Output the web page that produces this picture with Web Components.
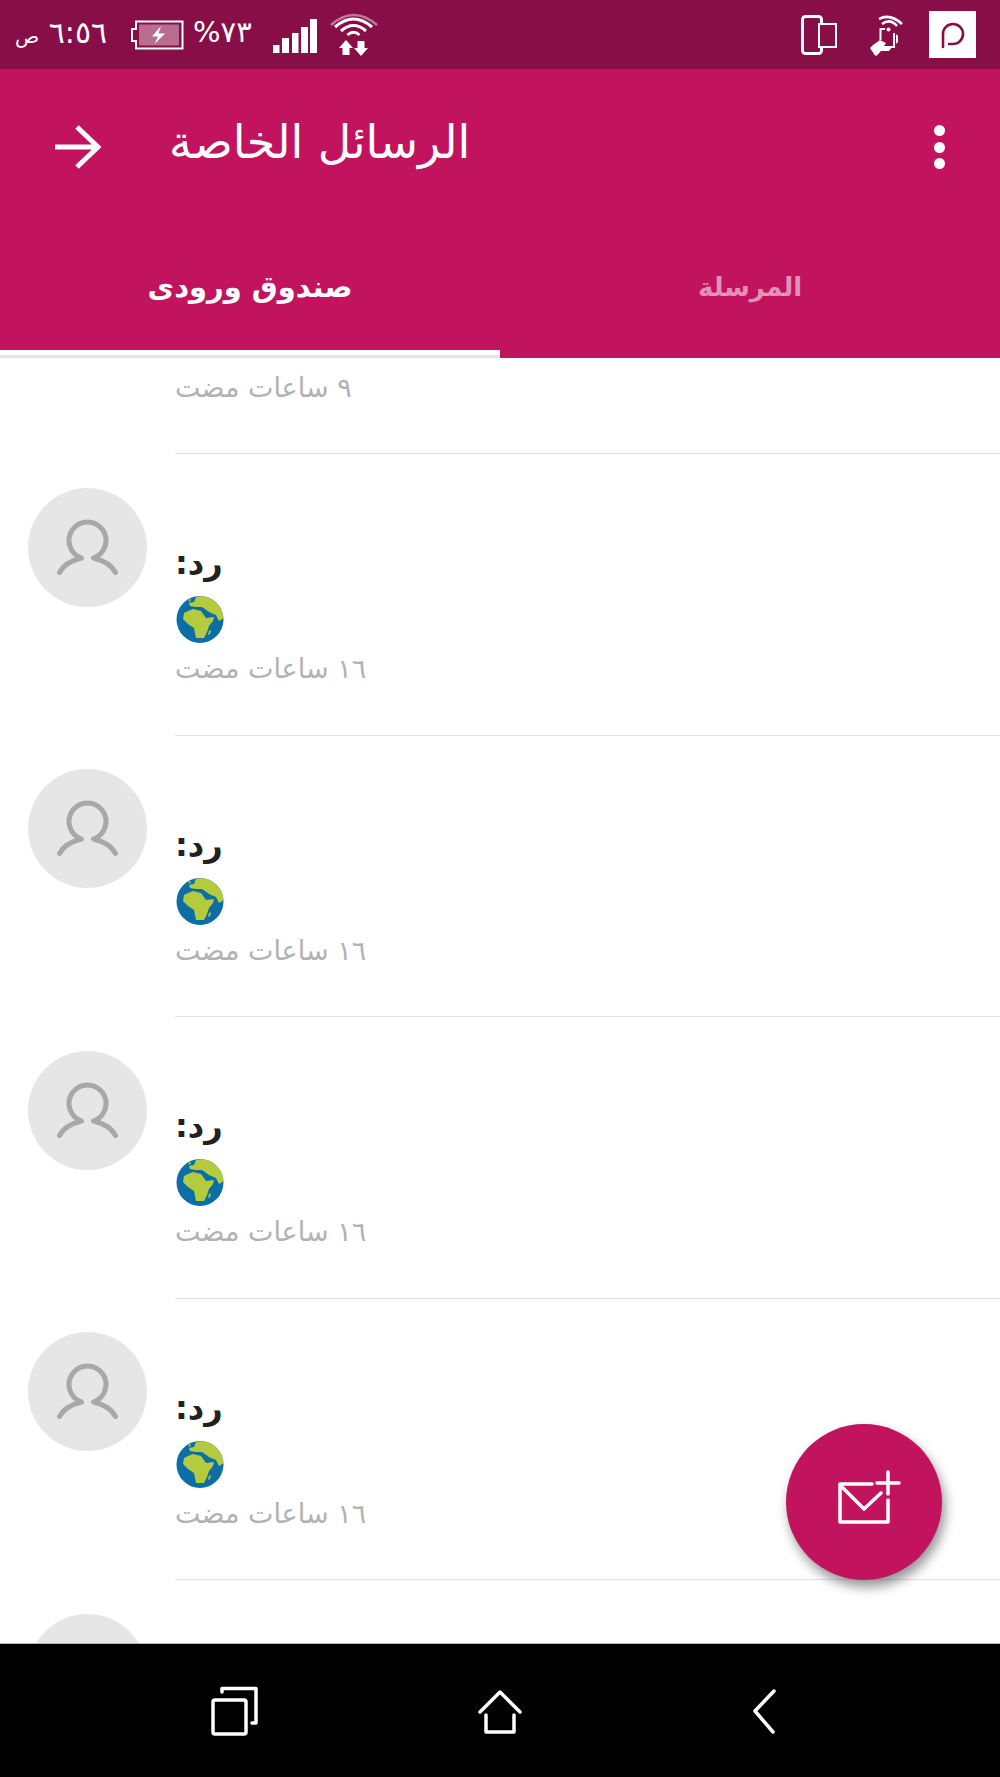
<!DOCTYPE html>
<html lang="ar">
<head>
<meta charset="utf-8">
<title>الرسائل الخاصة</title>
<style>
  html, body { margin: 0; height: 100%; background: #fff; }
  body { font-family: "DejaVu Sans", sans-serif; overflow: hidden; }
  .screen { display: flex; flex-direction: column; height: 1777px; }
</style>
</head>
<body>
<div class="screen">
  <status-bar></status-bar>
  <app-header heading="الرسائل الخاصة">
    <span slot="active">صندوق ورودى</span>
    <span slot="other">المرسلة</span>
  </app-header>
  <message-list>
    <message-row partial><span slot="time">٩ ساعات مضت</span></message-row>
    <message-row><span slot="name">رد:</span><span slot="time">١٦ ساعات مضت</span></message-row>
    <message-row><span slot="name">رد:</span><span slot="time">١٦ ساعات مضت</span></message-row>
    <message-row><span slot="name">رد:</span><span slot="time">١٦ ساعات مضت</span></message-row>
    <message-row><span slot="name">رد:</span><span slot="time">١٦ ساعات مضت</span></message-row>
    <message-row empty></message-row>
    <compose-fab slot="fab"></compose-fab>
  </message-list>
  <nav-bar></nav-bar>
</div>

<script>
// status bar with the system icons
class StatusBar extends HTMLElement {
  constructor() {
    super();
    this.attachShadow({ mode: 'open' });
    this.shadowRoot.innerHTML = `
      <style>
        :host {
          display: flex;
          flex: none;
          height: 69px;
          background: #880e47;
          color: #fff;
          justify-content: space-between;
          align-items: center;
          padding: 0 24px 0 15px;
        }
        .group { display: flex; align-items: center; }
        svg { display: block; flex: none; }
        .clock { font-size: 30px; width: 100px; margin-top: -4px; white-space: nowrap; text-align: left; }
        .clock small { font-size: 20px; }
        .pct { font-size: 29px; width: 80px; margin: -5px 0 0 9px; white-space: nowrap; text-align: left; }
      </style>
      <div class="group">
        <div class="clock"><span dir="rtl">٦:٥٦ <small>ص</small></span></div>
        <svg width="54" height="30" viewBox="0 0 54 30" style="margin-left:15px">
          <path d="M6 1.500H52.500V28.500H6V21H2V9H6Z" fill="none" stroke="#fff" stroke-width="2"/>
          <rect x="9" y="4.500" width="40" height="21" fill="#fff" fill-opacity=".4"/>
          <path d="M31 6L22 16.500H28L24.500 24L35 13.500H28.500Z" fill="#fff"/>
        </svg>
        <div class="pct"><span dir="rtl">٧٣%</span></div>
        <svg width="44" height="34" viewBox="0 0 44 34" style="margin-top:2px">
          <path d="M0 26h6.500v8H0zM9 19h7v15H9zM19 14h6.500v20H19zM28 8h7v26h-7zM37 0h7v34h-7z" fill="#fff"/>
        </svg>
        <svg width="48" height="48" viewBox="0 0 48 48" style="margin-left:13px">
          <path d="M1 14Q23.500 -6 47 14" fill="none" stroke="#fff" stroke-opacity=".45" stroke-width="2.500"/>
          <path d="M5 16Q23.500 0 42 16" fill="none" stroke="#fff" stroke-width="3"/>
          <path d="M11 20Q23.500 9 36 20" fill="none" stroke="#fff" stroke-width="3"/>
          <path d="M17.500 24Q23.500 18.500 29.500 24" fill="none" stroke="#fff" stroke-width="3"/>
          <path d="M16 29L9 37H12.500V44H19.500V37H23Z" fill="#fff"/>
          <path d="M27.500 30H34.500V37H38L31 45L24 37H27.500Z" fill="#fff"/>
        </svg>
      </div>
      <div class="group">
        <svg width="36" height="40" viewBox="0 0 36 40">
          <rect x="1.500" y="1.500" width="19" height="37" rx="3" fill="none" stroke="#fff" stroke-width="3"/>
          <rect x="18" y="9" width="17" height="23" fill="#880e47" stroke="#fff" stroke-width="2"/>
        </svg>
        <svg width="36" height="42" viewBox="0 0 36 42" style="margin-left:32px">
          <path d="M10 5Q21 -1 33 10" fill="none" stroke="#fff" stroke-width="2.500"/>
          <path d="M13 10Q21 4 28 12" fill="none" stroke="#fff" stroke-width="2.500"/>
          <circle cx="19.500" cy="15.500" r="2" fill="#fff"/>
          <path d="M11.500 26V15H16M25 19V33H14" fill="none" stroke="#fff" stroke-width="2"/>
          <path d="M27 20L29 22V28L27 30Z" fill="#fff"/>
          <path d="M1 34L4 31L11 26L17 29L15 32H24L20 37L12 37L8 41.500L6 41.500Z" fill="#fff"/>
        </svg>
        <svg width="47" height="47" viewBox="0 0 47 47" style="margin-left:24px">
          <rect width="47" height="47" fill="#fff"/>
          <path d="M14 36V23A10 10 0 1 1 24 33H20" fill="none" stroke="#880e47" stroke-width="2.600" stroke-linecap="round"/>
        </svg>
      </div>
    `;
  }
}

// toolbar plus the two tabs
class AppHeader extends HTMLElement {
  constructor() {
    super();
    this.attachShadow({ mode: 'open' });
    this.shadowRoot.innerHTML = `
      <style>
        :host { display: block; flex: none; background: #c2135e; color: #fff; }
        .toolbar {
          display: flex;
          align-items: center;
          height: 152px;
          box-sizing: border-box;
          padding: 4px 55px 0 55px;
        }
        .title { font-size: 46px; margin-left: 68px; flex: 1; text-align: left; margin-top: -10px; }
        .dots { display: flex; flex-direction: column; gap: 5.500px; }
        .dots i { display: block; width: 11px; height: 11px; border-radius: 50%; background: #fff; }
        .tabs { display: grid; grid-template-columns: 1fr 1fr; height: 137px; }
        .tab {
          display: flex;
          align-items: center;
          justify-content: center;
          font-weight: bold;
          padding-bottom: 2px;
          box-sizing: border-box;
        }
        .tab.active { font-size: 29px; border-bottom: 3px solid #e4e4e4; position: relative; background: #c2135e; }
        .tab.active::after {
          content: "";
          position: absolute;
          left: 0; right: 0; bottom: 0;
          height: 5px;
          background: #fff;
        }
        .tab.other { font-size: 26px; color: rgba(255,255,255,.55); padding-bottom: 5px; }
      </style>
      <div class="toolbar">
        <svg width="46" height="46" viewBox="0 0 46 46">
          <path d="M0 23H43M22 3L43 23L22 43" fill="none" stroke="#fff" stroke-width="5"/>
        </svg>
        <div class="title"><span dir="rtl">${this.getAttribute('heading')}</span></div>
        <div class="dots"><i></i><i></i><i></i></div>
      </div>
      <div class="tabs">
        <div class="tab active"><span dir="rtl"><slot name="active"></slot></span></div>
        <div class="tab other"><span dir="rtl"><slot name="other"></slot></span></div>
      </div>
    `;
  }
}

class MessageList extends HTMLElement {
  constructor() {
    super();
    this.attachShadow({ mode: 'open' });
    this.shadowRoot.innerHTML = `
      <style>
        :host { display: block; flex: 1; min-height: 0; position: relative; overflow: hidden; background: #fff; }
      </style>
      <slot></slot>
      <slot name="fab"></slot>
    `;
  }
}

class UserAvatar extends HTMLElement {
  constructor() {
    super();
    this.attachShadow({ mode: 'open' });
    this.shadowRoot.innerHTML = `
      <style>
        :host { display: block; width: 119px; height: 119px; border-radius: 50%; background: #e6e6e6; }
        svg { display: block; }
      </style>
      <svg width="119" height="119" viewBox="0 0 119 119">
        <path d="M31.500 84.500Q37 74 53.500 70A18.500 18.500 0 1 1 65.500 70Q82 74 87.500 84.500" fill="none" stroke="#a8a8a8" stroke-width="5" stroke-linecap="round" stroke-linejoin="round"/>
      </svg>
    `;
  }
}

// the earth emoji, drawn since no emoji font is available
class GlobeIcon extends HTMLElement {
  constructor() {
    super();
    this.attachShadow({ mode: 'open' });
    this.shadowRoot.innerHTML = `
      <style>
        :host { display: block; width: 48px; height: 47px; }
        svg { display: block; }
      </style>
      <svg width="48" height="47" viewBox="0 0 48 47">
        <defs><clipPath id="disc"><circle cx="24" cy="23.500" r="23.500"/></clipPath></defs>
        <circle cx="24" cy="23.500" r="23.500" fill="#0b6fa6"/>
        <g clip-path="url(#disc)" fill="#b5cb3f">
          <path d="M8 17L12 15L17 13L25 15L30 22L38 21L37 25L33 30L31 36L28 42L20 42L18 32L12 28L7 23Z"/>
          <path d="M20 1L30 -1L40 3L46 12L48 22L43 25L40 19L33 16L29 13L26 11L20 11L14 10L13 7L18 6Z"/>
          <path d="M33 35L35 34L34 38L32 39Z"/>
        </g>
        <path d="M12 4L15 3L14 6Z" fill="#b5cb3f"/>
      </svg>
    `;
  }
}

class MessageRow extends HTMLElement {
  constructor() {
    super();
    this.attachShadow({ mode: 'open' });
    const partial = this.hasAttribute('partial');
    const empty = this.hasAttribute('empty');
    this.shadowRoot.innerHTML = `
      <style>
        :host { display: flex; height: ${partial ? 96 : 281.5}px; box-sizing: border-box; color: #212121; }
        .side { width: 147px; flex: none; padding: 33.500px 0 0 28px; box-sizing: border-box; }
        .body {
          flex: 1;
          margin-left: 28px;
          border-bottom: 1px solid #e2e2e2;
          padding-top: ${partial ? 12 : 91}px;
        }
        .name { font-size: 32px; font-weight: bold; line-height: 36px; height: 36px; text-align: left; }
        globe-icon { margin: 15px 0 8px 1px; }
        .time { font-size: 27px; line-height: 36px; color: #b2b2b2; text-align: left; }
      </style>
      <div class="side">${partial ? '' : '<user-avatar></user-avatar>'}</div>
      <div class="body">
        ${partial || empty ? '' : '<div class="name"><span dir="rtl"><slot name="name"></slot></span></div><globe-icon></globe-icon>'}
        ${empty ? '' : '<div class="time"><span dir="rtl"><slot name="time"></slot></span></div>'}
      </div>
    `;
  }
}

class ComposeFab extends HTMLElement {
  constructor() {
    super();
    this.attachShadow({ mode: 'open' });
    this.shadowRoot.innerHTML = `
      <style>
        :host {
          display: block;
          position: absolute;
          left: 786px;
          top: 1066px;
          width: 156px;
          height: 156px;
          border-radius: 50%;
          background: #c2135e;
          box-shadow: 3px 7px 12px rgba(0,0,0,.42);
        }
        svg { display: block; }
      </style>
      <svg width="156" height="156" viewBox="0 0 156 156">
        <path d="M86 60H54V98H102V76M55 62L78 85L95 69M91 59H113M102 48V70" fill="none" stroke="#fff" stroke-width="3.500" stroke-linecap="round" stroke-linejoin="round"/>
      </svg>
    `;
  }
}

class NavBar extends HTMLElement {
  constructor() {
    super();
    this.attachShadow({ mode: 'open' });
    this.shadowRoot.innerHTML = `
      <style>
        :host {
          display: grid;
          flex: none;
          grid-template-columns: repeat(3, 1fr);
          height: 134px;
          padding: 0 102px;
          box-sizing: border-box;
          background: #000;
          border-top: 1px solid #b5b5b5;
          align-items: center;
          justify-items: center;
        }
        svg { display: block; }
        path, rect { fill: none; stroke: #fff; stroke-width: 3.500; stroke-linecap: round; stroke-linejoin: round; }
      </style>
      <svg width="50" height="50" viewBox="0 0 50 50">
        <path d="M12 6V2.500H46V37H42"/>
        <rect x="3" y="14" width="33" height="34" rx="2"/>
      </svg>
      <svg width="46" height="46" viewBox="0 0 46 46">
        <path d="M3 24L23 4L43 24M9 27V44H37V27"/>
      </svg>
      <svg width="30" height="46" viewBox="0 0 30 46">
        <path d="M24 3L5 23L23 44"/>
      </svg>
    `;
  }
}

customElements.define('status-bar', StatusBar);
customElements.define('app-header', AppHeader);
customElements.define('message-list', MessageList);
customElements.define('user-avatar', UserAvatar);
customElements.define('globe-icon', GlobeIcon);
customElements.define('message-row', MessageRow);
customElements.define('compose-fab', ComposeFab);
customElements.define('nav-bar', NavBar);
</script>
</body>
</html>
